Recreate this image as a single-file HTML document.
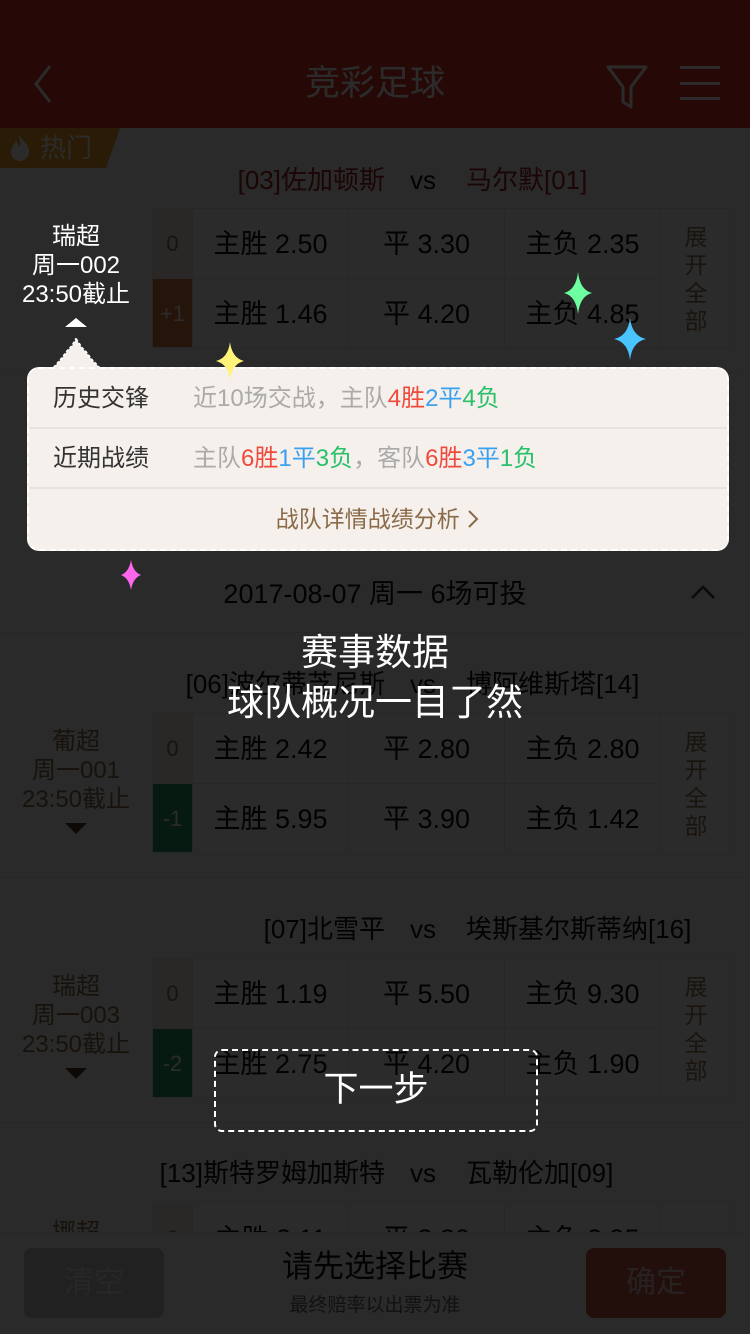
<!DOCTYPE html>
<html style="overflow:hidden"><head><meta charset="utf-8"><style>
*{margin:0;padding:0;box-sizing:border-box}
html,body{width:750px;height:1334px;overflow:hidden}
body{position:relative;background:#f6f6f6;font-family:"Liberation Sans","Noto Sans CJK SC",sans-serif;color:#111}
.abs{position:absolute}
.hdr{left:0;top:0;width:750px;height:128px;background:#e0362c;color:#fff}
.hot{left:0;top:128px;width:120px;height:40px;background:#f0a020;clip-path:polygon(0 0,120px 0,106px 40px,0 40px);color:#fff;font-size:26px;line-height:40px;padding-left:40px}
.title{width:750px;height:40px;font-size:26px;line-height:40px}
.title .l{position:absolute;right:365px;white-space:nowrap}
.title .v{position:absolute;left:410px}
.title .r{position:absolute;left:466px;white-space:nowrap}
.grid{left:152px;width:578px;height:140px;background:#fff;border:1px solid #e4e4e4;overflow:hidden}
.cell{position:absolute;height:70px;line-height:70px;font-size:27px;text-align:center;border-right:1px solid #e8e8e8;border-bottom:1px solid #e8e8e8}
.hc{left:0;width:40px;color:#8a7a60;font-size:22px}
.exp{left:508px;width:70px;top:0;height:140px;line-height:28px;font-size:23px;color:#9a7a56;padding-top:14px;text-align:center;border:none}
.lg{left:0;width:152px;text-align:center;font-size:24px;line-height:29px;color:#8b6a48}
.tri{width:0;height:0;border-left:11px solid transparent;border-right:11px solid transparent;border-top:11px solid #4a3a28;left:65px}
.line{left:0;width:750px;height:1px;background:#e4e4e4}
.ov{left:0;top:0;width:750px;height:1334px;background:rgba(0,0,0,.83)}
.pop{left:27px;top:367px;width:702px;height:184px;background:#f5f0eb;border:2px dashed #fff;border-radius:12px}
.pr{height:60px;line-height:60px;font-size:24px;border-bottom:2px solid #e8e3de;padding-left:24px;color:#333}
.pr span.k{display:inline-block;width:140px}
.g{color:#aaa}.rd{color:#f04a3c}.bl{color:#3aa0f0}.gn{color:#2ac06a}
</style></head><body>
<div class="abs hdr">
<svg class="abs" style="left:28px;top:62px" width="30" height="46"><path d="M22 4 L8 22 L22 40" stroke="#fff" stroke-width="3" fill="none"/></svg>
<div class="abs" style="left:0;width:750px;top:60px;text-align:center;font-size:35px;line-height:48px">竞彩足球</div>
<svg class="abs" style="left:604px;top:64px" width="46" height="46"><path d="M4 3 H42 L27 23 V43 L19 38 V23 Z" stroke="#fff" stroke-width="3" fill="none" stroke-linejoin="round"/></svg>
<div class="abs" style="left:680px;top:66px;width:40px;height:3px;background:#fff"></div>
<div class="abs" style="left:680px;top:82px;width:40px;height:3px;background:#fff"></div>
<div class="abs" style="left:680px;top:97px;width:40px;height:3px;background:#fff"></div>
</div>
<div class="abs hot">热门</div>
<svg class="abs" style="left:9px;top:134px" width="22" height="28"><path d="M10 1 C14 8 21 10 20 19 C19 25 14 27 11 27 C5 27 2 23 2 18 C2 13 6 11 7 6 C9 9 9 12 11 13 C12 9 10 5 10 1Z" fill="#fff"/></svg>

<div class="abs title" style="top:160px"><span class="l" style="color:#a02020">[03]佐加顿斯</span><span class="v">vs</span><span class="r" style="color:#a02020">马尔默[01]</span></div>
<div class="abs grid" style="top:208px">
<div class="cell hc" style="top:0;background:#efe9e2">0</div><div class="cell hc" style="top:70px;background:#d87838;color:#fff">+1</div>
<div class="cell" style="left:40px;width:156px;top:0">主胜 2.50</div><div class="cell" style="left:196px;width:156px;top:0">平 3.30</div><div class="cell" style="left:352px;width:156px;top:0">主负 2.35</div>
<div class="cell" style="left:40px;width:156px;top:70px">主胜 1.46</div><div class="cell" style="left:196px;width:156px;top:70px">平 4.20</div><div class="cell" style="left:352px;width:156px;top:70px">主负 4.85</div>
<div class="cell exp">展<br>开<br>全<br>部</div></div>
<div class="abs line" style="top:372px"></div>
<div class="abs line" style="top:632px"></div>
<div class="abs" style="left:0;width:750px;top:572px;text-align:center;font-size:27px;line-height:44px">2017-08-07 周一 6场可投</div>
<svg class="abs" style="left:690px;top:583px" width="26" height="18"><path d="M2 15 L13 4 L24 15" stroke="#4a3a28" stroke-width="2.5" fill="none"/></svg>

<div class="abs title" style="top:664px"><span class="l">[06]波尔蒂芝尼斯</span><span class="v">vs</span><span class="r">博阿维斯塔[14]</span></div>
<div class="abs lg" style="top:727px">葡超<br>周一001<br>23:50截止</div><div class="abs tri" style="top:823px"></div>
<div class="abs grid" style="top:713px">
<div class="cell hc" style="top:0;background:#efe9e2">0</div><div class="cell hc" style="top:70px;background:#2a9a68;color:#fff">-1</div>
<div class="cell" style="left:40px;width:156px;top:0">主胜 2.42</div><div class="cell" style="left:196px;width:156px;top:0">平 2.80</div><div class="cell" style="left:352px;width:156px;top:0">主负 2.80</div>
<div class="cell" style="left:40px;width:156px;top:70px">主胜 5.95</div><div class="cell" style="left:196px;width:156px;top:70px">平 3.90</div><div class="cell" style="left:352px;width:156px;top:70px">主负 1.42</div>
<div class="cell exp">展<br>开<br>全<br>部</div></div>
<div class="abs line" style="top:877px"></div>

<div class="abs title" style="top:909px"><span class="l">[07]北雪平</span><span class="v">vs</span><span class="r">埃斯基尔斯蒂纳[16]</span></div>
<div class="abs lg" style="top:972px">瑞超<br>周一003<br>23:50截止</div><div class="abs tri" style="top:1068px"></div>
<div class="abs grid" style="top:958px">
<div class="cell hc" style="top:0;background:#efe9e2">0</div><div class="cell hc" style="top:70px;background:#2a9a68;color:#fff">-2</div>
<div class="cell" style="left:40px;width:156px;top:0">主胜 1.19</div><div class="cell" style="left:196px;width:156px;top:0">平 5.50</div><div class="cell" style="left:352px;width:156px;top:0">主负 9.30</div>
<div class="cell" style="left:40px;width:156px;top:70px">主胜 2.75</div><div class="cell" style="left:196px;width:156px;top:70px">平 4.20</div><div class="cell" style="left:352px;width:156px;top:70px">主负 1.90</div>
<div class="cell exp">展<br>开<br>全<br>部</div></div>
<div class="abs line" style="top:1122px"></div>

<div class="abs title" style="top:1153px"><span class="l">[13]斯特罗姆加斯特</span><span class="v">vs</span><span class="r">瓦勒伦加[09]</span></div>
<div class="abs lg" style="top:1218px">挪超</div>
<div class="abs grid" style="top:1203px;height:120px">
<div class="cell hc" style="top:0;background:#efe9e2">0</div>
<div class="cell" style="left:40px;width:156px;top:0">主胜 2.11</div><div class="cell" style="left:196px;width:156px;top:0">平 3.30</div><div class="cell" style="left:352px;width:156px;top:0">主负 2.95</div></div>

<div class="abs" style="left:0;top:1232px;width:750px;height:102px;background:#fafafa;border-top:1px solid #e4e4e4"></div>
<div class="abs" style="left:24px;top:1248px;width:140px;height:70px;border-radius:8px;background:#c4c4c4;color:#e4e4e4;font-size:30px;text-align:center;line-height:70px">清空</div>
<div class="abs" style="left:586px;top:1248px;width:140px;height:70px;border-radius:8px;background:#c8584a;color:#e8c8c4;font-size:30px;text-align:center;line-height:70px">确定</div>
<div class="abs" style="left:0;width:750px;top:1246px;text-align:center;font-size:31px;line-height:42px">请先选择比赛</div>
<div class="abs" style="left:0;width:750px;top:1292px;text-align:center;font-size:19px;line-height:28px;color:#666">最终赔率以出票为准</div>

<div class="abs ov"></div>

<div class="abs lg" style="top:222px;color:#fff">瑞超<br>周一002<br>23:50截止</div>
<div class="abs" style="left:65px;top:318px;width:0;height:0;border-left:11px solid transparent;border-right:11px solid transparent;border-bottom:9px solid #fff"></div>
<svg class="abs" style="left:48px;top:338px" width="56" height="34"><path d="M28 1 L34 10 L38 14 L44 22 L50 28 L54 34 L2 34 L8 27 L14 20 L20 12 L24 8 Z" fill="#f5f0eb" stroke="#fff" stroke-width="2" stroke-dasharray="3 2"/></svg>
<div class="abs pop">
<div class="pr"><span class="k">历史交锋</span><span class="g">近10场交战，主队</span><span class="rd">4胜</span><span class="bl">2平</span><span class="gn">4负</span></div>
<div class="pr"><span class="k">近期战绩</span><span class="g">主队</span><span class="rd">6胜</span><span class="bl">1平</span><span class="gn">3负</span><span class="g">，客队</span><span class="rd">6胜</span><span class="bl">3平</span><span class="gn">1负</span></div>
<div style="text-align:center;font-size:23px;line-height:60px;color:#8a6a48">战队详情战绩分析 <svg width="14" height="20" style="vertical-align:-2px"><path d="M3 2 L11 10 L3 18" stroke="#8a6a48" stroke-width="2" fill="none"/></svg></div>
</div>
<svg class="abs" style="left:0;top:0" width="750" height="620">
<path d="M230 342 Q232 358 244 361 Q232 364 230 380 Q228 364 216 361 Q228 358 230 342Z" fill="#fff37a"/>
<path d="M578 272 Q580 290 592 293 Q580 296 578 314 Q576 296 564 293 Q576 290 578 272Z" fill="#6effa0"/>
<path d="M630 318 Q632 336 646 339 Q632 342 630 360 Q628 342 614 339 Q628 336 630 318Z" fill="#4ac4ff"/>
<path d="M131 560 Q133 572 141 575 Q133 578 131 590 Q129 578 121 575 Q129 572 131 560Z" fill="#ff66ee"/>
</svg>
<div class="abs" style="left:0;width:750px;top:628px;text-align:center;color:#fff;font-size:37px;line-height:50px">赛事数据</div>
<div class="abs" style="left:0;width:750px;top:678px;text-align:center;color:#fff;font-size:37px;line-height:50px">球队概况一目了然</div>
<div class="abs" style="left:214px;top:1049px;width:324px;height:83px;border:2px dashed #fff;border-radius:8px;color:#fff;font-size:35px;text-align:center;line-height:78px">下一步</div>
</body></html>
